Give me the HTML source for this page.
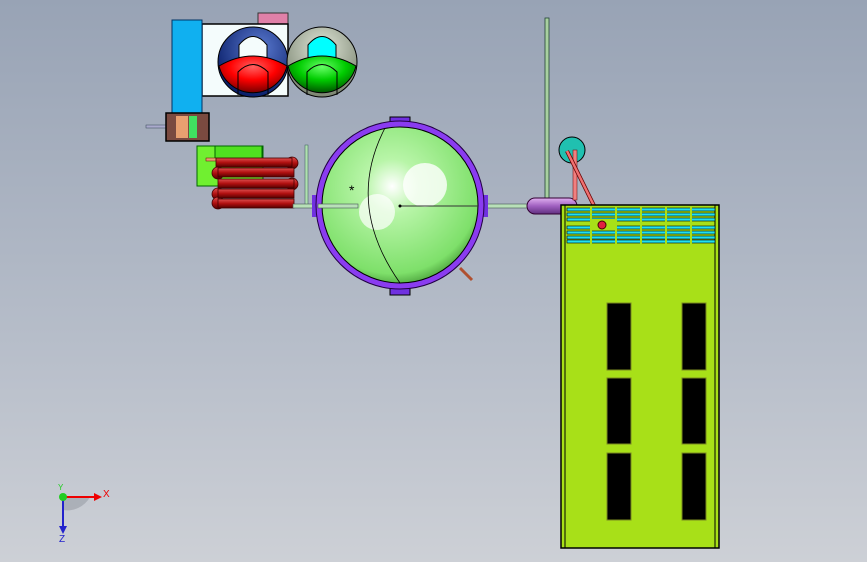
<!DOCTYPE html>
<html><head><style>
html,body{margin:0;padding:0;width:867px;height:562px;overflow:hidden}
body{background:linear-gradient(#98a3b5,#b6bdc9 60%,#cdd0d6);font-family:"Liberation Sans",sans-serif}
</style></head><body>
<svg width="867" height="562" viewBox="0 0 867 562" xmlns="http://www.w3.org/2000/svg">
<defs>
<radialGradient id="g" cx="0.45" cy="0.38" r="0.7"><stop offset="0" stop-color="#fff"/><stop offset="0.25" stop-color="#b8f5a8"/><stop offset="0.8" stop-color="#7ee06a"/><stop offset="1" stop-color="#2c7a20"/></radialGradient>
<radialGradient id="bl" cx="0.6" cy="0.3" r="0.7"><stop offset="0" stop-color="#5a7ad0"/><stop offset="1" stop-color="#0a1f6a"/></radialGradient>
<radialGradient id="rd" cx="0.5" cy="0.3" r="0.7"><stop offset="0" stop-color="#ff6060"/><stop offset="0.5" stop-color="#f00"/><stop offset="1" stop-color="#700"/></radialGradient>
<radialGradient id="gr" cx="0.5" cy="0.3" r="0.7"><stop offset="0" stop-color="#6f6"/><stop offset="0.5" stop-color="#0c0"/><stop offset="1" stop-color="#050"/></radialGradient>
<radialGradient id="gy" cx="0.5" cy="0.3" r="0.7"><stop offset="0" stop-color="#e0e6d8"/><stop offset="1" stop-color="#7a8470"/></radialGradient>
<linearGradient id="tube" x1="0" y1="0" x2="0" y2="1"><stop offset="0" stop-color="#e05050"/><stop offset="0.5" stop-color="#b01010"/><stop offset="1" stop-color="#500"/></linearGradient>
<linearGradient id="pur" x1="0" y1="0" x2="0" y2="1"><stop offset="0" stop-color="#e0b0f0"/><stop offset="0.5" stop-color="#a060c0"/><stop offset="1" stop-color="#603080"/></linearGradient>
</defs>
<rect x="258" y="13" width="30" height="12" fill="#e080a8" stroke="#333"/>
<rect x="202" y="24" width="86" height="72" fill="#f4fcfc" stroke="#000" stroke-width="1.5"/>
<rect x="172" y="20" width="30" height="93" fill="#10b0f0" stroke="#036"/>
<circle cx="253" cy="62" r="35" fill="url(#bl)" stroke="#000"/>
<path d="M239,64 L239,45 Q253,28 267,45 L267,64Z" fill="#f4fcfc" stroke="#000"/>
<path d="M219,66 Q253,46 287,66 A35,35 0 0 1 219,66Z" fill="url(#rd)" stroke="#000"/>
<path d="M238,95 L238,72 Q253,57 268,72 L268,95" fill="none" stroke="#000"/>
<circle cx="322" cy="62" r="35" fill="url(#gy)" stroke="#000"/>
<path d="M308,64 L308,45 Q322,28 336,45 L336,64Z" fill="#0ff" stroke="#000"/>
<path d="M288,66 Q322,46 356,66 A35,35 0 0 1 288,66Z" fill="url(#gr)" stroke="#000"/>
<path d="M307,95 L307,72 Q322,57 337,72 L337,95" fill="none" stroke="#000"/>
<rect x="146" y="125" width="20" height="3" fill="#aac" stroke="#345" stroke-width="0.5"/>
<rect x="166" y="113" width="43" height="28" fill="#7a4a40" stroke="#000" stroke-width="1.5"/>
<rect x="176" y="116" width="12" height="22" fill="#e8a070"/>
<rect x="189" y="116" width="8" height="22" fill="#40e060"/>
<rect x="197" y="146" width="66" height="40" fill="#70f030" stroke="#060"/>
<rect x="215" y="146" width="47" height="14" fill="#50e020" stroke="#060"/>
<rect x="206" y="158" width="10" height="3" fill="#e8a070" stroke="#600" stroke-width="0.5"/>
<g fill="url(#tube)" stroke="#400" stroke-width="0.8">
<circle cx="292" cy="163" r="6"/><circle cx="292" cy="184" r="6"/>
<circle cx="218" cy="173" r="6"/><circle cx="218" cy="194" r="6"/><circle cx="218" cy="203" r="6"/>
<rect x="216" y="158" width="76" height="9"/><rect x="218" y="168" width="76" height="9"/>
<rect x="218" y="179" width="76" height="9"/><rect x="218" y="189" width="76" height="9"/>
<rect x="218" y="199" width="76" height="9"/>
</g>
<rect x="305" y="145" width="3" height="60" fill="#b0e0b0" stroke="#355" stroke-width="0.5"/>
<rect x="293" y="204" width="267" height="4" fill="#b8e0b8" stroke="#455" stroke-width="0.6"/>
<rect x="390" y="117" width="20" height="8" fill="#7030e0" stroke="#000"/>
<rect x="390" y="287" width="20" height="8" fill="#7030e0" stroke="#000"/>
<rect x="312" y="195" width="7" height="22" fill="#7030e0"/>
<rect x="481" y="195" width="7" height="22" fill="#7030e0"/>
<circle cx="400" cy="205" r="84" fill="#8a3cf0" stroke="#204" />
<circle cx="400" cy="205" r="78" fill="url(#g)" stroke="#000"/>
<circle cx="425" cy="185" r="22" fill="#fff" opacity="0.8"/>
<circle cx="377" cy="212" r="18" fill="#fff" opacity="0.7"/>
<path d="M385,128 Q345,205 400,283" fill="none" stroke="#000" stroke-width="0.8"/>
<rect x="318" y="204" width="40" height="4" fill="#b8e0b8" stroke="#455" stroke-width="0.6"/>
<line x1="400" y1="206" x2="478" y2="206" stroke="#333"/>
<circle cx="400" cy="206" r="1.5" fill="#000"/>
<line x1="460" y1="268" x2="472" y2="280" stroke="#b05030" stroke-width="3"/>
<text x="349" y="195" font-size="14" fill="#000">*</text>
<rect x="545" y="18" width="4" height="188" fill="#a8d0a0" stroke="#243" stroke-width="0.8"/>
<rect x="527" y="198" width="50" height="16" rx="8" fill="url(#pur)" stroke="#303"/>
<circle cx="572" cy="150" r="13" fill="#20c0b0" stroke="#000"/>
<rect x="573" y="150" width="4" height="50" fill="#f08080" stroke="#600" stroke-width="0.5"/>
<line x1="567" y1="151" x2="603" y2="224" stroke="#600" stroke-width="4"/>
<line x1="567" y1="151" x2="603" y2="224" stroke="#f07070" stroke-width="2.5"/>
<rect x="561" y="205" width="158" height="343" fill="#a8e018" stroke="#000" stroke-width="1.5"/>
<line x1="565" y1="205" x2="565" y2="548" stroke="#000"/>
<line x1="715" y1="205" x2="715" y2="548" stroke="#000"/>
<g fill="#20e0f0" stroke="#000" stroke-width="0.6">
<rect x="567" y="208" width="148" height="3"/><rect x="567" y="213" width="148" height="3"/>
<rect x="567" y="218" width="148" height="3"/><rect x="567" y="226" width="148" height="3"/>
<rect x="567" y="231" width="148" height="3"/><rect x="567" y="236" width="148" height="3"/>
<rect x="567" y="240" width="148" height="3"/>
</g>
<g stroke="#a8e018" stroke-width="2"><line x1="591" y1="207" x2="591" y2="244"/><line x1="616" y1="207" x2="616" y2="244"/><line x1="641" y1="207" x2="641" y2="244"/><line x1="666" y1="207" x2="666" y2="244"/><line x1="691" y1="207" x2="691" y2="244"/></g>
<rect x="591" y="219" width="25" height="11" fill="#a8e018"/>
<circle cx="602" cy="225" r="4" fill="#e02040" stroke="#400"/>
<g fill="#000" stroke="#7a8a20">
<rect x="607" y="303" width="24" height="67"/><rect x="682" y="303" width="24" height="67"/>
<rect x="607" y="378" width="24" height="66"/><rect x="682" y="378" width="24" height="66"/>
<rect x="607" y="453" width="24" height="67"/><rect x="682" y="453" width="24" height="67"/>
</g>
<path d="M63,497 L63,510 A26,26 0 0 0 90,497Z" fill="#a0a4ac" opacity="0.7"/>
<line x1="63" y1="497" x2="94" y2="497" stroke="#e00" stroke-width="2"/>
<path d="M94,493 L102,497 L94,501Z" fill="#e00"/>
<line x1="63" y1="497" x2="63" y2="526" stroke="#22c" stroke-width="2"/>
<path d="M59,526 L63,534 L67,526Z" fill="#22c"/>
<circle cx="63" cy="497" r="4" fill="#2c2"/>
<text x="103" y="497" font-size="10" fill="#e00">X</text>
<text x="59" y="542" font-size="10" fill="#22c">Z</text>
<text x="58" y="490" font-size="8" fill="#2c2">Y</text>
</svg>
</body></html>
